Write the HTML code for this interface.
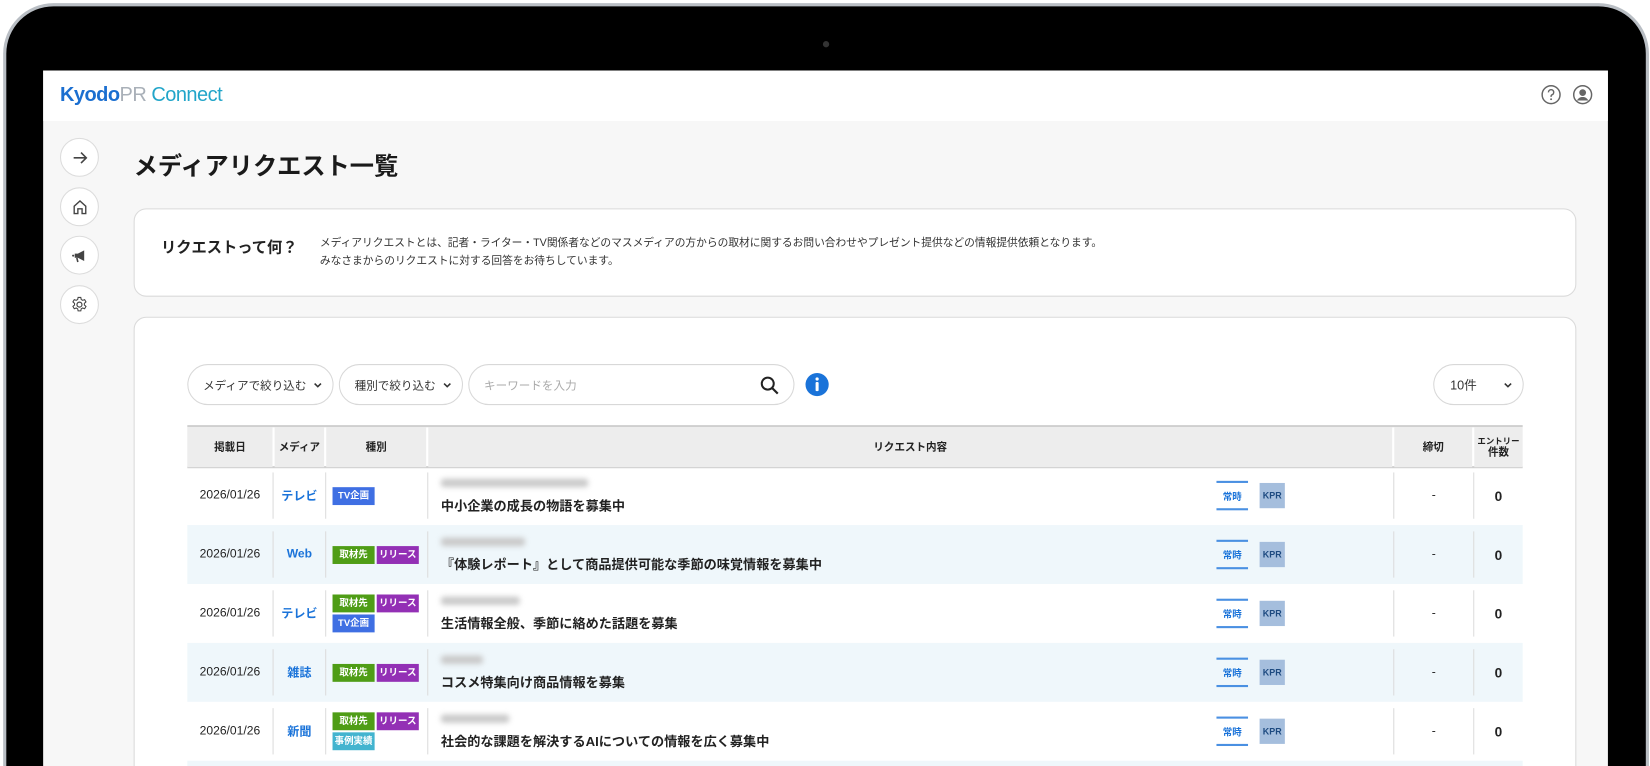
<!DOCTYPE html>
<html><head><meta charset="utf-8">
<style>
*{margin:0;padding:0;box-sizing:border-box}
html,body{width:1650px;height:766px;overflow:hidden;background:#fff}
body{font-family:"Liberation Sans","Noto Sans CJK JP",sans-serif;color:#222}
#clip{position:absolute;left:0;top:0;width:1650px;height:766px;overflow:hidden}
#w{position:absolute;left:0;top:0;width:1568px;height:728px;overflow:hidden;transform:scale(1.05230,1.05220);transform-origin:0 0}
.frame{position:absolute;left:3px;top:3px;width:1564px;height:900px;border-radius:48px;background:#b9bec4}
.bezel{position:absolute;left:6px;top:6px;width:1558px;height:900px;border-radius:45px;background:#000}
.cam{position:absolute;left:782px;top:39px;width:6px;height:6px;border-radius:50%;background:#333}
.screen{position:absolute;left:41px;top:67px;width:1487px;height:700px;background:#f7f7f7;overflow:hidden}
.hdr{position:absolute;left:0;top:0;width:100%;height:48px;background:#fff}
.abs{position:absolute}
.circ{position:absolute;width:37px;height:37px;border-radius:50%;background:#fff;border:1px solid #dcdcdc;display:flex;align-items:center;justify-content:center}
.card{position:absolute;background:#fff;border:1px solid #dadada;border-radius:12px}
.pill{position:absolute;height:39px;border:1px solid #d8d8d8;border-radius:20px;background:#fff;font-size:11px;display:flex;align-items:center;color:#333}
.th{position:absolute;top:0;height:38px;background:#ededed;font-size:10px;font-weight:bold;display:flex;align-items:center;justify-content:center;text-align:center;line-height:11px}
.row{position:absolute;left:0;width:1269px;height:56px}
.row.b{background:#eff7fb}
.c{position:absolute;top:0;height:56px;display:flex;align-items:center;justify-content:center;font-size:11.5px}
.vd{position:absolute;top:6px;width:1px;height:44px;background:#dcdcdc}
.tag{display:inline-block;height:17px;line-height:17px;font-size:9px;font-weight:bold;color:#fff;text-align:center;margin:1px 1px}
.g{background:#4f9d16;width:40px}.p{background:#9330b5;width:40px}.t{background:#3f6fe3;width:40px}.q{background:#43b4cf;width:40px}
.blur{position:absolute;height:8px;background:#c9c9c9;filter:blur(2.5px);border-radius:3px}
.ttl{position:absolute;left:12px;font-size:12.5px;font-weight:bold;color:#222}
.jo{position:absolute;left:749px;top:14px;width:30px;height:28px;border-top:2px solid #4a90e2;border-bottom:2px solid #4a90e2;color:#1a73d9;font-size:9px;font-weight:bold;display:flex;align-items:center;justify-content:center}
.kpr{position:absolute;left:790px;top:16px;width:24px;height:24px;background:#a5bedd;color:#1d4a80;font-size:8.5px;font-weight:bold;display:flex;align-items:center;justify-content:center}
.med{color:#1a73d9;font-weight:bold}
</style></head><body><div id="clip"><div id="w">
<div class="frame"></div><div class="bezel"></div><div class="cam"></div>
<div class="screen">
 <div class="hdr">
  <div class="abs" style="left:16px;top:13px;font-size:19px;font-weight:bold;letter-spacing:-0.5px;white-space:nowrap"><span style="color:#1b6fd0">Kyodo</span><span style="color:#a9b0b8;font-weight:normal">PR</span> <span style="color:#22a5c9;font-weight:normal">Connect</span></div>
  <svg class="abs" style="left:1423px;top:13px" width="20" height="20" viewBox="0 0 20 20"><circle cx="10" cy="10" r="8.5" fill="none" stroke="#666" stroke-width="1.4"/><path d="M7.5 7.8a2.5 2.5 0 1 1 3.3 2.3c-.6.3-.8.7-.8 1.4v.6" fill="none" stroke="#666" stroke-width="1.4"/><circle cx="10" cy="14.3" r=".9" fill="#666"/></svg>
  <svg class="abs" style="left:1453px;top:13px" width="20" height="20" viewBox="0 0 20 20"><circle cx="10" cy="10" r="8.5" fill="none" stroke="#666" stroke-width="1.4"/><circle cx="10" cy="8" r="3.2" fill="#666"/><path d="M4.5 15.5c1.5-2.5 3.3-3.3 5.5-3.3s4 .8 5.5 3.3" fill="#666"/></svg>
 </div>
 <div class="circ" style="left:16px;top:64px"><svg width="16" height="16" viewBox="0 0 16 16"><path d="M2 8h12M9 3l5 5-5 5" fill="none" stroke="#444" stroke-width="1.5"/></svg></div>
 <div class="circ" style="left:16px;top:111px"><svg width="16" height="16" viewBox="0 0 16 16"><path d="M2.5 14V7L8 2l5.5 5v7h-3.5v-4.5h-4V14z" fill="none" stroke="#444" stroke-width="1.3"/></svg></div>
 <div class="circ" style="left:16px;top:157px"><svg width="16" height="16" viewBox="0 0 16 16"><path d="M3 6h3l6-3v10l-6-3H3z" fill="#444"/><path d="M5 10l1 4" stroke="#444" stroke-width="1.5"/><circle cx="1.5" cy="8" r="1" fill="#444"/></svg></div>
 <div class="circ" style="left:16px;top:204px"><svg width="17" height="17" viewBox="0 0 20 20"><circle cx="10" cy="10" r="2.8" fill="none" stroke="#444" stroke-width="1.3"/><path d="M8.5 2h3l.5 2.3 1.6.9 2.2-.8 1.5 2.6-1.8 1.6v1.8l1.8 1.6-1.5 2.6-2.2-.8-1.6.9-.5 2.3h-3l-.5-2.3-1.6-.9-2.2.8-1.5-2.6 1.8-1.6V8.6L2.7 7l1.5-2.6 2.2.8L8 4.3z" fill="none" stroke="#444" stroke-width="1.2"/></svg></div>
 <div class="abs" style="left:86px;top:72px;font-size:23px;font-weight:bold;color:#1a1a1a">メディアリクエスト一覧</div>
 <div class="card" style="left:86px;top:131px;width:1371px;height:84px">
  <div class="abs" style="left:25px;top:25px;font-size:14.5px;font-weight:bold">リクエストって何？</div>
  <div class="abs" style="left:176px;top:24px;font-size:10.2px;line-height:17px;color:#333">メディアリクエストとは、記者・ライター・TV関係者などのマスメディアの方からの取材に関するお問い合わせやプレゼント提供などの情報提供依頼となります。<br>みなさまからのリクエストに対する回答をお待ちしています。</div>
 </div>
 <div class="card" style="left:86px;top:234px;width:1371px;height:500px">
  <div class="pill" style="left:50px;top:44px;width:139px;padding-left:14px">メディアで絞り込む<svg class="abs" style="right:9px;top:14px" width="10" height="10" viewBox="0 0 10 10"><path d="M2 3.5l3 3 3-3" fill="none" stroke="#333" stroke-width="1.5"/></svg></div>
  <div class="pill" style="left:194px;top:44px;width:118px;padding-left:14px">種別で絞り込む<svg class="abs" style="right:9px;top:14px" width="10" height="10" viewBox="0 0 10 10"><path d="M2 3.5l3 3 3-3" fill="none" stroke="#333" stroke-width="1.5"/></svg></div>
  <div class="pill" style="left:317px;top:44px;width:310px;padding-left:14px;color:#aaa">キーワードを入力<svg class="abs" style="right:13px;top:10px" width="19" height="19" viewBox="0 0 20 20"><circle cx="8" cy="8" r="6" fill="none" stroke="#222" stroke-width="2"/><path d="M12.5 12.5l5.5 5.5" stroke="#222" stroke-width="2.2"/></svg></div>
  <svg class="abs" style="left:637px;top:52px" width="23" height="23" viewBox="0 0 24 24"><circle cx="12" cy="12" r="11.5" fill="#1a73d9"/><circle cx="12" cy="6.5" r="1.6" fill="#fff"/><rect x="10.5" y="9.5" width="3" height="9" rx="1" fill="#fff"/></svg>
  <div class="pill" style="left:1234px;top:44px;width:86px;padding-left:15px;font-size:12px">10件<svg class="abs" style="right:9px;top:14px" width="10" height="10" viewBox="0 0 10 10"><path d="M2 3.5l3 3 3-3" fill="none" stroke="#333" stroke-width="1.5"/></svg></div>
  <div class="abs" style="left:50px;top:102px;width:1269px;height:460px">
   <div class="abs" style="left:0;top:0;width:1269px;height:41px;border-top:2px solid #cfcfcf;border-bottom:2px solid #cfcfcf;background:#fff">
    <div class="th" style="left:0;width:81px">掲載日</div>
    <div class="th" style="left:83px;width:47px">メディア</div>
    <div class="th" style="left:132px;width:95px">種別</div>
    <div class="th" style="left:229px;width:916px">リクエスト内容</div>
    <div class="th" style="left:1147px;width:74px">締切</div>
    <div class="th" style="left:1223px;width:46px"><span><span style="font-size:8px">エントリー</span><br>件数</span></div>
   </div>
   <div class="row" style="top:39px">
    <div class="c" style="left:0;width:81px">2026/01/26</div><div class="vd" style="left:81px"></div>
    <div class="c med" style="left:82px;width:49px">テレビ</div><div class="vd" style="left:131px"></div>
    <div class="c" style="left:132px;width:96px;justify-content:flex-start;padding-left:5px"><span class="tag t">TV企画</span></div><div class="vd" style="left:228px"></div>
    <div class="abs" style="left:229px;top:0;width:916px;height:56px"><div class="blur" style="left:12px;top:12px;width:140px"></div><div class="ttl" style="top:27px">中小企業の成長の物語を募集中</div><div class="jo">常時</div><div class="kpr">KPR</div></div>
    <div class="vd" style="left:1146px"></div><div class="c" style="left:1147px;width:75px">-</div><div class="vd" style="left:1222px"></div><div class="c" style="left:1223px;width:46px;font-weight:bold;font-size:13px">0</div>
   </div>
   <div class="row b" style="top:95px">
    <div class="c" style="left:0;width:81px">2026/01/26</div><div class="vd" style="left:81px"></div>
    <div class="c med" style="left:82px;width:49px">Web</div><div class="vd" style="left:131px"></div>
    <div class="c" style="left:132px;width:96px;justify-content:flex-start;padding-left:5px"><span class="tag g">取材先</span><span class="tag p">リリース</span></div><div class="vd" style="left:228px"></div>
    <div class="abs" style="left:229px;top:0;width:916px;height:56px"><div class="blur" style="left:12px;top:12px;width:80px"></div><div class="ttl" style="top:27px">『体験レポート』として商品提供可能な季節の味覚情報を募集中</div><div class="jo">常時</div><div class="kpr">KPR</div></div>
    <div class="vd" style="left:1146px"></div><div class="c" style="left:1147px;width:75px">-</div><div class="vd" style="left:1222px"></div><div class="c" style="left:1223px;width:46px;font-weight:bold;font-size:13px">0</div>
   </div>
   <div class="row" style="top:151px">
    <div class="c" style="left:0;width:81px">2026/01/26</div><div class="vd" style="left:81px"></div>
    <div class="c med" style="left:82px;width:49px">テレビ</div><div class="vd" style="left:131px"></div>
    <div class="c" style="left:132px;width:96px;justify-content:flex-start;padding-left:5px;flex-wrap:wrap;align-content:center"><span class="tag g">取材先</span><span class="tag p">リリース</span><span class="tag t">TV企画</span></div><div class="vd" style="left:228px"></div>
    <div class="abs" style="left:229px;top:0;width:916px;height:56px"><div class="blur" style="left:12px;top:12px;width:75px"></div><div class="ttl" style="top:27px">生活情報全般、季節に絡めた話題を募集</div><div class="jo">常時</div><div class="kpr">KPR</div></div>
    <div class="vd" style="left:1146px"></div><div class="c" style="left:1147px;width:75px">-</div><div class="vd" style="left:1222px"></div><div class="c" style="left:1223px;width:46px;font-weight:bold;font-size:13px">0</div>
   </div>
   <div class="row b" style="top:207px">
    <div class="c" style="left:0;width:81px">2026/01/26</div><div class="vd" style="left:81px"></div>
    <div class="c med" style="left:82px;width:49px">雑誌</div><div class="vd" style="left:131px"></div>
    <div class="c" style="left:132px;width:96px;justify-content:flex-start;padding-left:5px"><span class="tag g">取材先</span><span class="tag p">リリース</span></div><div class="vd" style="left:228px"></div>
    <div class="abs" style="left:229px;top:0;width:916px;height:56px"><div class="blur" style="left:12px;top:12px;width:40px"></div><div class="ttl" style="top:27px">コスメ特集向け商品情報を募集</div><div class="jo">常時</div><div class="kpr">KPR</div></div>
    <div class="vd" style="left:1146px"></div><div class="c" style="left:1147px;width:75px">-</div><div class="vd" style="left:1222px"></div><div class="c" style="left:1223px;width:46px;font-weight:bold;font-size:13px">0</div>
   </div>
   <div class="row" style="top:263px">
    <div class="c" style="left:0;width:81px">2026/01/26</div><div class="vd" style="left:81px"></div>
    <div class="c med" style="left:82px;width:49px">新聞</div><div class="vd" style="left:131px"></div>
    <div class="c" style="left:132px;width:96px;justify-content:flex-start;padding-left:5px;flex-wrap:wrap;align-content:center"><span class="tag g">取材先</span><span class="tag p">リリース</span><span class="tag q">事例実績</span></div><div class="vd" style="left:228px"></div>
    <div class="abs" style="left:229px;top:0;width:916px;height:56px"><div class="blur" style="left:12px;top:12px;width:65px"></div><div class="ttl" style="top:27px">社会的な課題を解決するAIについての情報を広く募集中</div><div class="jo">常時</div><div class="kpr">KPR</div></div>
    <div class="vd" style="left:1146px"></div><div class="c" style="left:1147px;width:75px">-</div><div class="vd" style="left:1222px"></div><div class="c" style="left:1223px;width:46px;font-weight:bold;font-size:13px">0</div>
   </div>
   <div class="row b" style="top:319px"></div>
  </div>
 </div>
</div>
</div></div></body></html>
